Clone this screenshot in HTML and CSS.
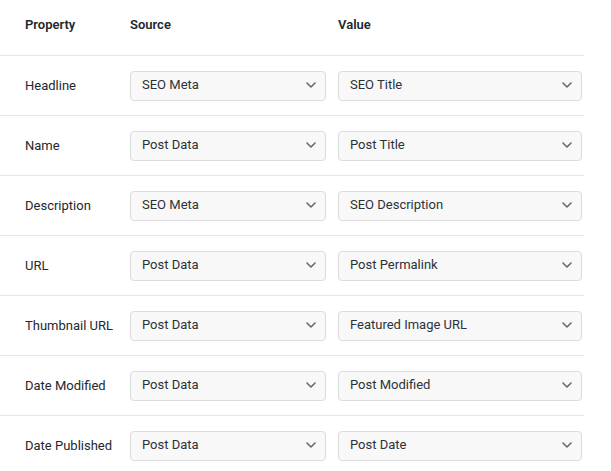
FILE: index.html
```html
<!DOCTYPE html>
<html>
<head>
<meta charset="utf-8">
<link rel="stylesheet" href="styles.css">
</head>
<body>
<div class="table">
  <div class="row head">
    <div class="c-prop">Property</div>
    <div class="c-src">Source</div>
    <div class="c-val">Value</div>
  </div>
  <div class="row">
    <div class="c-prop">Headline</div>
    <div class="c-src"><div class="select">SEO Meta<svg class="chev" viewBox="0 0 10 6"><path d="M1 1 L5 5 L9 1"/></svg></div></div>
    <div class="c-val"><div class="select">SEO Title<svg class="chev" viewBox="0 0 10 6"><path d="M1 1 L5 5 L9 1"/></svg></div></div>
  </div>
  <div class="row">
    <div class="c-prop">Name</div>
    <div class="c-src"><div class="select">Post Data<svg class="chev" viewBox="0 0 10 6"><path d="M1 1 L5 5 L9 1"/></svg></div></div>
    <div class="c-val"><div class="select">Post Title<svg class="chev" viewBox="0 0 10 6"><path d="M1 1 L5 5 L9 1"/></svg></div></div>
  </div>
  <div class="row">
    <div class="c-prop">Description</div>
    <div class="c-src"><div class="select">SEO Meta<svg class="chev" viewBox="0 0 10 6"><path d="M1 1 L5 5 L9 1"/></svg></div></div>
    <div class="c-val"><div class="select">SEO Description<svg class="chev" viewBox="0 0 10 6"><path d="M1 1 L5 5 L9 1"/></svg></div></div>
  </div>
  <div class="row">
    <div class="c-prop">URL</div>
    <div class="c-src"><div class="select">Post Data<svg class="chev" viewBox="0 0 10 6"><path d="M1 1 L5 5 L9 1"/></svg></div></div>
    <div class="c-val"><div class="select">Post Permalink<svg class="chev" viewBox="0 0 10 6"><path d="M1 1 L5 5 L9 1"/></svg></div></div>
  </div>
  <div class="row">
    <div class="c-prop">Thumbnail URL</div>
    <div class="c-src"><div class="select">Post Data<svg class="chev" viewBox="0 0 10 6"><path d="M1 1 L5 5 L9 1"/></svg></div></div>
    <div class="c-val"><div class="select">Featured Image URL<svg class="chev" viewBox="0 0 10 6"><path d="M1 1 L5 5 L9 1"/></svg></div></div>
  </div>
  <div class="row">
    <div class="c-prop">Date Modified</div>
    <div class="c-src"><div class="select">Post Data<svg class="chev" viewBox="0 0 10 6"><path d="M1 1 L5 5 L9 1"/></svg></div></div>
    <div class="c-val"><div class="select">Post Modified<svg class="chev" viewBox="0 0 10 6"><path d="M1 1 L5 5 L9 1"/></svg></div></div>
  </div>
  <div class="row">
    <div class="c-prop">Date Published</div>
    <div class="c-src"><div class="select">Post Data<svg class="chev" viewBox="0 0 10 6"><path d="M1 1 L5 5 L9 1"/></svg></div></div>
    <div class="c-val"><div class="select">Post Date<svg class="chev" viewBox="0 0 10 6"><path d="M1 1 L5 5 L9 1"/></svg></div></div>
  </div>
</div>
</body>
</html>
```
FILE: styles.css
```css
html, body {
  margin: 0;
  padding: 0;
  background: #ffffff;
}
body {
  font-family: Roboto, "Liberation Sans", Arial, sans-serif;
  font-size: 13px;
  line-height: 16px;
  color: #23282d;
}
.table {
  width: 584px;
}
.row {
  display: flex;
  align-items: center;
  height: 59px;
  padding-left: 25px;
  border-top: 1px solid #e5e5e5;
}
.row.head {
  border-top: none;
  height: 38px;
  padding-top: 17px;
  align-items: flex-start;
  font-weight: 600;
  color: #23282d;
}
.c-prop {
  width: 105px;
  flex: none;
}
.c-src {
  width: 196px;
  margin-right: 12px;
  flex: none;
}
.c-val {
  width: 244px;
  flex: none;
}
.select {
  box-sizing: border-box;
  height: 30px;
  border: 1px solid #dcdcde;
  border-radius: 4px;
  background: #f8f8f8;
  padding: 0 9px 1px 11px;
  display: flex;
  align-items: center;
  justify-content: space-between;
  color: #2c3338;
}
.chev {
  width: 10px;
  height: 6px;
  fill: none;
  stroke: #646970;
  stroke-width: 1.6;
  stroke-linecap: round;
  stroke-linejoin: round;
}
```
